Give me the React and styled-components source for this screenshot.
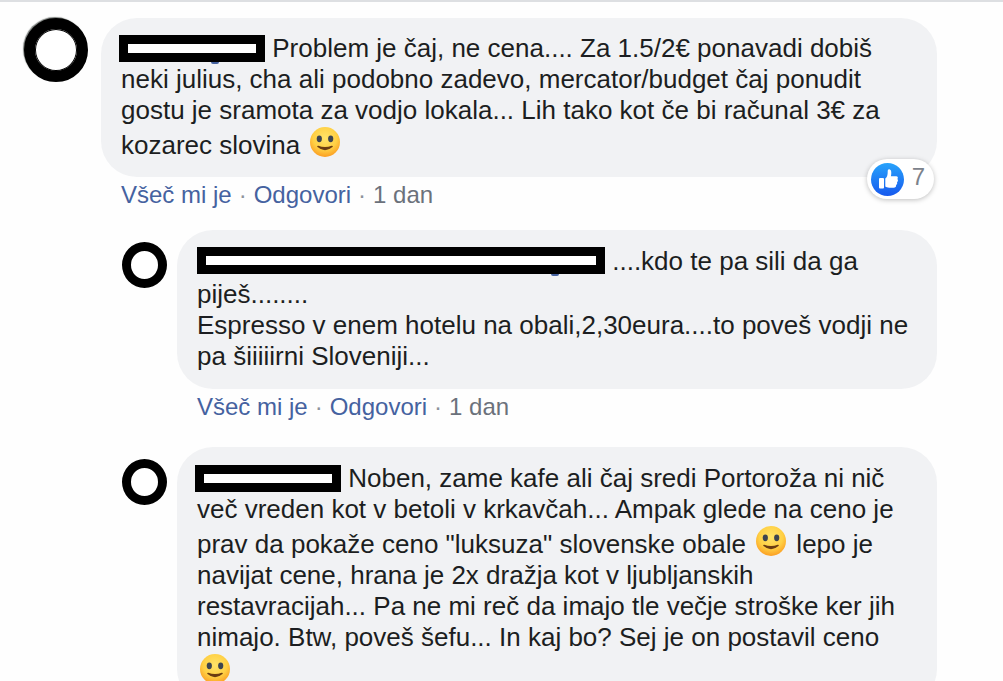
import React from 'react';
import styled, { createGlobalStyle } from 'styled-components';

const GlobalStyle = createGlobalStyle`
    body {
        margin: 0;
        background: #fefefe;
        font-family: "Liberation Sans", Arial, sans-serif;
    }
`;

const Thread = styled.main`
    height: 100vh;
    box-sizing: border-box;
    overflow: hidden;
    border-top: 2px solid #dddfe2;
    padding: 16px 66px 0 24px;
`;

const Comment = styled.article`
    display: flex;
    align-items: flex-start;
    gap: ${props => (props.$reply ? '10px' : '13px')};
`;

const Replies = styled.section`
    display: flex;
    flex-direction: column;
    gap: 24px;
    margin-top: 19px;
    padding-left: 98px;
`;

const Avatar = styled.div`
    flex: none;
    box-sizing: border-box;
    width: ${props => (props.$small ? '45px' : '64px')};
    height: ${props => (props.$small ? '46px' : '64px')};
    margin-top: ${props => (props.$small ? '12px' : '0')};
    border: ${props => (props.$small ? '9px' : '11px')} solid #000;
    border-radius: 50%;
    background: #fff;
    box-shadow: ${props => (props.$small ? 'none' : 'inset 0 0 0 1px #000, -1px -1px 1px #777b78')};
`;

const CommentBody = styled.div`
    flex: 1;
    min-width: 0;
`;

const Bubble = styled.div`
    position: relative;
    padding: ${props => (props.$reply ? '16px 20px 17px' : '15px 20px 16px')};
    border-radius: 36px;
    background: #f1f2f4;
`;

const CommentText = styled.p`
    margin: 0;
    color: #1c1e21;
    font-size: 26px;
    line-height: 31px;
`;

const HiddenName = styled.span`
    position: relative;
    display: inline-block;
    box-sizing: border-box;
    width: ${props => (props.$long ? '408px' : '146px')};
    height: 27px;
    margin-left: ${props => (props.$long ? '0' : '-2px')};
    margin-bottom: ${props => (props.$long ? '5px' : '0')};
    border: 9px solid #000;
    background: #fff;
    vertical-align: ${props => (props.$long ? '-9px' : '-5px')};

    /* descender of the covered name, still showing under the bar */
    &::after {
        content: '';
        display: ${props => (props.$descender ? 'block' : 'none')};
        position: absolute;
        right: 37px;
        bottom: -11px;
        width: 8px;
        height: 2px;
        border-radius: 0 0 4px 4px;
        background: #4562a0;
    }
`;

const Smiley = styled.svg`
    width: 32px;
    height: 32px;
    margin: 0 2px;
    vertical-align: -4px;
`;

const Reactions = styled.button`
    position: absolute;
    right: 3px;
    bottom: -22px;
    display: flex;
    align-items: center;
    gap: 8px;
    height: 40px;
    padding: 0 9px 0 4px;
    border: 0;
    border-radius: 20px;
    background: #fff;
    box-shadow: 0 1px 5px rgba(0, 0, 0, 0.25);
    color: #7c828b;
    font-family: inherit;
    font-size: 24px;
    line-height: 32px;

    svg {
        width: 33px;
        height: 33px;
    }

    span {
        padding-bottom: 4px;
    }
`;

const Actions = styled.footer`
    display: flex;
    gap: 7px;
    padding: 2px 20px 0;
    color: #8d929b;
    font-size: 24px;
    line-height: 32px;
`;

const ActionButton = styled.button`
    padding: 0;
    border: 0;
    background: none;
    color: #4562a0;
    font: inherit;
    cursor: pointer;
`;

const TimeLink = styled.a`
    color: #6b717b;
    text-decoration: none;
`;

function SmileyIcon({ id }) {
    return (
        <Smiley viewBox="0 0 32 32" role="img" aria-label="smiley">
            <defs>
                <radialGradient id={id} cx="50%" cy="36%" r="66%">
                    <stop offset="0" stopColor="#ffe368" />
                    <stop offset="0.6" stopColor="#ffd044" />
                    <stop offset="1" stopColor="#fb9a20" />
                </radialGradient>
            </defs>
            <circle cx="16" cy="16" r="15" fill={`url(#${id})`} />
            <ellipse cx="10.3" cy="12.8" rx="2.6" ry="3.4" fill="#3d4450" />
            <ellipse cx="21.7" cy="12.8" rx="2.6" ry="3.4" fill="#3d4450" />
            <path d="M9 20.5Q16 26.5 23 20.5Q16 23 9 20.5Z" fill="#6b3c12" stroke="#6b3c12" strokeWidth="1.6" strokeLinejoin="round" />
        </Smiley>
    );
}

function LikeIcon() {
    return (
        <svg viewBox="0 0 33 33" aria-hidden="true">
            <defs>
                <linearGradient id="like-fill" x1="0" y1="0" x2="0" y2="1">
                    <stop offset="0" stopColor="#27a3fb" />
                    <stop offset="1" stopColor="#1759ee" />
                </linearGradient>
            </defs>
            <circle cx="16.5" cy="16.5" r="16.5" fill="url(#like-fill)" />
            <rect x="8" y="15" width="5" height="10.5" rx="1" fill="#fff" />
            <path
                d="M14.3 15.6C16 14.2 16.8 12 16.7 9C16.6 6.7 17.3 6.1 18.2 6.2C20.4 6.4 20.7 9.6 19.9 13.2H25.2C26.8 13.2 27.4 14.8 26.4 16C27.3 17 27.1 18.5 26 19.2C26.5 20.3 26.1 21.4 25.1 22C25.3 23.8 24.4 24.8 22.6 24.8H18.2C16.5 24.8 15.3 24.3 14.3 23.6Z"
                fill="#fff"
            />
        </svg>
    );
}

function CommentActions() {
    return (
        <Actions>
            <ActionButton type="button">Všeč mi je</ActionButton>
            <span>·</span>
            <ActionButton type="button">Odgovori</ActionButton>
            <span>·</span>
            <TimeLink href="#">1 dan</TimeLink>
        </Actions>
    );
}

function App() {
    return (
        <>
            <GlobalStyle />
            <Thread>
                <Comment>
                    <Avatar />
                    <CommentBody>
                        <Bubble>
                            <CommentText>
                                <HiddenName $descender /> Problem je čaj, ne cena.... Za 1.5/2€ ponavadi dobiš neki julius, cha ali podobno zadevo, mercator/budget čaj ponudit gostu je sramota za vodjo lokala... Lih tako kot če bi računal 3€ za kozarec slovina <SmileyIcon id="smiley-1" />
                            </CommentText>
                            <Reactions type="button">
                                <LikeIcon />
                                <span>7</span>
                            </Reactions>
                        </Bubble>
                        <CommentActions />
                    </CommentBody>
                </Comment>

                <Replies>
                    <Comment $reply>
                        <Avatar $small />
                        <CommentBody>
                            <Bubble $reply>
                                <CommentText>
                                    <HiddenName $long $descender /> ....kdo te pa sili da ga piješ........
                                    <br />
                                    Espresso v enem hotelu na obali,2,30eura....to poveš vodji ne pa šiiiiirni Sloveniji...
                                </CommentText>
                            </Bubble>
                            <CommentActions />
                        </CommentBody>
                    </Comment>

                    <Comment $reply>
                        <Avatar $small />
                        <CommentBody>
                            <Bubble $reply>
                                <CommentText>
                                    <HiddenName /> Noben, zame kafe ali čaj sredi Portoroža ni nič več vreden kot v betoli v krkavčah... Ampak glede na ceno je prav da pokaže ceno "luksuza" slovenske obale <SmileyIcon id="smiley-2" /> lepo je navijat cene, hrana je 2x dražja kot v ljubljanskih restavracijah... Pa ne mi reč da imajo tle večje stroške ker jih nimajo. Btw, poveš šefu... In kaj bo? Sej je on postavil ceno <SmileyIcon id="smiley-3" />
                                </CommentText>
                            </Bubble>
                        </CommentBody>
                    </Comment>
                </Replies>
            </Thread>
        </>
    );
}

export default App;
